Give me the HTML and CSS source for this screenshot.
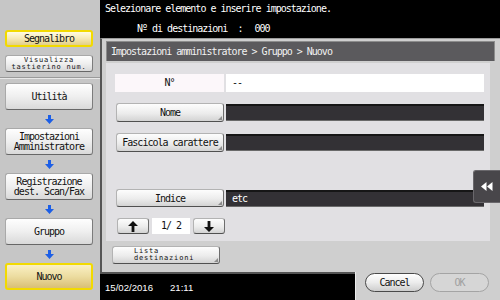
FILE: index.html
```html
<!DOCTYPE html>
<html lang="it">
<head>
  <meta charset="UTF-8">
  <title>Gruppo - Nuovo</title>
  <link rel="stylesheet" href="styles.css">
</head>
<body>
  <div class="screen">
    <aside class="sidebar">
      <div class="side-top">
        <button class="side-btn yellow">Segnalibro</button>
        <button class="side-btn tiny">Visualizza<br>tastierino num.</button>
      </div>
      <div class="steps">
        <button class="step">Utilità</button>
        <div class="down"><svg width="9" height="9" viewBox="0 0 9 9"><path d="M3 0h3v4h3L4.5 9 0 4h3z"/></svg></div>
        <button class="step">Impostazioni<br>Amministratore</button>
        <div class="down"><svg width="9" height="9" viewBox="0 0 9 9"><path d="M3 0h3v4h3L4.5 9 0 4h3z"/></svg></div>
        <button class="step">Registrazione<br>dest. Scan/Fax</button>
        <div class="down"><svg width="9" height="9" viewBox="0 0 9 9"><path d="M3 0h3v4h3L4.5 9 0 4h3z"/></svg></div>
        <button class="step">Gruppo</button>
        <div class="down"><svg width="9" height="9" viewBox="0 0 9 9"><path d="M3 0h3v4h3L4.5 9 0 4h3z"/></svg></div>
        <button class="step current">Nuovo</button>
      </div>
    </aside>

    <main class="main">
      <div class="topbar">
        <div class="msg">Selezionare elemento e inserire impostazione.</div>
        <div class="count">Nº di destinazioni  :<span class="num">000</span></div>
      </div>

      <section class="panel">
        <div class="crumb">Impostazioni amministratore &gt; Gruppo &gt; Nuovo</div>
        <div class="form">
          <div class="row first">
            <div class="label">N°</div>
            <div class="value">--</div>
          </div>
          <div class="row">
            <button class="key">Nome</button>
            <div class="field"></div>
          </div>
          <div class="row">
            <button class="key">Fascicola carattere</button>
            <div class="field"></div>
          </div>
          <div class="row index">
            <button class="key">Indice</button>
            <div class="field">etc</div>
          </div>
          <div class="pager">
            <button class="page-btn"><svg width="10" height="11" viewBox="0 0 10 11"><path d="M5 0l5 5H6.4v6H3.6V5H0z"/></svg></button>
            <div class="page-no">1/ 2</div>
            <button class="page-btn"><svg width="10" height="11" viewBox="0 0 10 11"><path d="M5 11l5-5H6.4V0H3.6v6H0z"/></svg></button>
          </div>
        </div>
        <div class="below">
          <button class="key tiny lista">Lista<br>destinazioni</button>
        </div>
        <button class="tab"><svg width="12" height="9" viewBox="0 0 12 9"><path d="M0 4.5L5.5 0v9zM6 4.5L11.5 0v9z"/></svg></button>
      </section>

      <footer class="footer">
        <div class="clock"><span>15/02/2016</span><span>21:11</span></div>
        <div class="actions">
          <button class="pill">Cancel</button>
          <button class="pill off">OK</button>
        </div>
      </footer>
    </main>
  </div>
</body>
</html>
```

FILE: styles.css
```css
body {
  margin: 0;
  width: 500px;
  height: 300px;
  overflow: hidden;
  font-family: "DejaVu Sans Mono", monospace;
  font-size: 10px;
  letter-spacing: -1px;
  color: #111;
}

button {
  font: inherit;
  letter-spacing: inherit;
  color: inherit;
  padding: 0;
  margin: 0;
  cursor: pointer;
}

.screen {
  display: flex;
  height: 300px;
}

/* left column */

.sidebar {
  width: 100px;
  background: #c6c6c6;
  display: flex;
  flex-direction: column;
}

.side-top {
  height: 78px;
  padding: 30px 7px 0 5px;
  box-sizing: border-box;
  display: flex;
  flex-direction: column;
  gap: 8px;
  border-bottom: 1px solid #9a9a9a;
  box-shadow: 0 1px 0 #e8e8e8;
}

.side-btn,
.step {
  height: 17px;
  border: 1px solid #a9a9a9;
  border-bottom-color: #676767;
  border-right-color: #7c7c7c;
  border-radius: 3px;
  background: linear-gradient(#fefefe, #efefef 50%, #d9d9d9);
  line-height: 9px;
}

.side-btn.yellow {
  border: 2px solid #f2da00;
  background: linear-gradient(#fffbe2, #f5e9b6 50%, #e3cf86);
}

.tiny {
  font-size: 7px;
  letter-spacing: 0.8px;
  line-height: 7px;
}

.steps {
  padding: 5px 7px 0 5px;
  display: flex;
  flex-direction: column;
}

.step {
  height: 27px;
  line-height: 10px;
}

.step.current {
  border: 2px solid #f2da00;
  background: linear-gradient(#faf0c4, #ecdca0 50%, #d9bf74);
}

.down {
  height: 18px;
  display: flex;
  align-items: center;
  justify-content: center;
}

.down svg {
  fill: #1d5fe6;
}

/* right side */

.main {
  width: 400px;
  background: #000;
  display: flex;
  flex-direction: column;
}

.topbar {
  height: 38px;
  padding: 3px 5px 0;
  box-sizing: border-box;
  color: #fff;
  line-height: 11px;
}

.count {
  margin-top: 9px;
  padding-left: 32px;
  white-space: pre;
}

.count .num {
  margin-left: 12px;
}

.panel {
  position: relative;
  height: 234px;
  box-sizing: border-box;
  border-left: 2px solid #555;
  border-top: 1px solid #9c9c9c;
  background: #cfcfcf;
  padding: 2px 5px 0 4px;
  display: flex;
  flex-direction: column;
}

.crumb {
  height: 19px;
  line-height: 19px;
  background: #5b5a5d;
  border: 1px solid #8c8c8c;
  border-bottom: none;
  color: #f2f2f2;
  padding-left: 4px;
}

.form {
  margin: 2px 5px 0 0;
  height: 178px;
  box-sizing: border-box;
  background: #e1e0e3;
  padding: 11px 6px 7px 9px;
  display: flex;
  flex-direction: column;
}

.row {
  display: flex;
  height: 19px;
  gap: 2px;
  margin-bottom: 11px;
}

.row.first {
  height: 18px;
}

.row.index {
  margin-top: 26px;
  height: 18px;
}

.label {
  width: 109px;
  background: #fcf7fa;
  text-align: center;
  line-height: 18px;
}

.value {
  flex: 1;
  background: #fff;
  line-height: 18px;
  padding-left: 6px;
}

.key {
  position: relative;
  width: 108px;
  margin-left: 1px;
  border: 1px solid #b3b3b3;
  border-bottom-color: #505050;
  border-right-color: #6d6d6d;
  border-radius: 3px;
  background: linear-gradient(#fdfdfd, #ececec 55%, #d3d3d3);
}

.key::after {
  content: "";
  position: absolute;
  right: 1px;
  bottom: 1px;
  border-left: 4px solid transparent;
  border-bottom: 4px solid #8c8c8c;
}

.field {
  flex: 1;
  margin-top: 1px;
  height: 17px;
  box-sizing: border-box;
  background: #333135;
  border-top: 2px solid #161616;
  border-bottom: 1px solid #6a6a6a;
  color: #fff;
  line-height: 14px;
  padding-left: 6px;
}

.pager {
  display: flex;
  gap: 3px;
  height: 16px;
  margin-left: 2px;
}

.page-btn {
  width: 32px;
  border: 1px solid #b3b3b3;
  border-bottom-color: #505050;
  border-right-color: #6d6d6d;
  border-radius: 3px;
  background: linear-gradient(#fdfdfd, #ececec 55%, #d3d3d3);
  display: flex;
  align-items: center;
  justify-content: center;
}

.page-btn svg {
  fill: #111;
}

.page-no {
  width: 38px;
  background: #fff;
  text-align: center;
  line-height: 16px;
  white-space: pre;
}

.below {
  padding: 5px 0 0 5px;
}

.lista {
  height: 18px;
  text-align: left;
  padding-left: 21px;
}

.tab {
  position: absolute;
  right: 0;
  top: 131px;
  width: 27px;
  height: 33px;
  border: 1px solid #6a686c;
  border-right: none;
  border-radius: 3px 0 0 3px;
  background: #48464a;
  display: flex;
  align-items: center;
  justify-content: center;
}

.tab svg {
  fill: #fff;
}

.footer {
  height: 28px;
  display: flex;
}

.clock {
  flex: 1;
  border-top: 2px solid #545454;
  color: #fff;
  font-family: "Liberation Sans", Arial, sans-serif;
  font-size: 9.6px;
  letter-spacing: 0;
  display: flex;
  align-items: center;
  gap: 17px;
  padding-left: 5px;
}

.actions {
  width: 145px;
  background: #cfcfcf;
  border-left: 1px solid #ececec;
  padding: 1px 0 0 9px;
  box-sizing: border-box;
  display: flex;
  gap: 6px;
  align-items: flex-start;
}

.pill {
  width: 59px;
  height: 19px;
  border: 1px solid #4a4a4a;
  border-radius: 10px;
  background: linear-gradient(#ffffff, #ececec 50%, #cdcdcd);
}

.pill.off {
  border-color: #a4a4a4;
  background: #d6d6d6;
  color: #a0a0a0;
}
```
